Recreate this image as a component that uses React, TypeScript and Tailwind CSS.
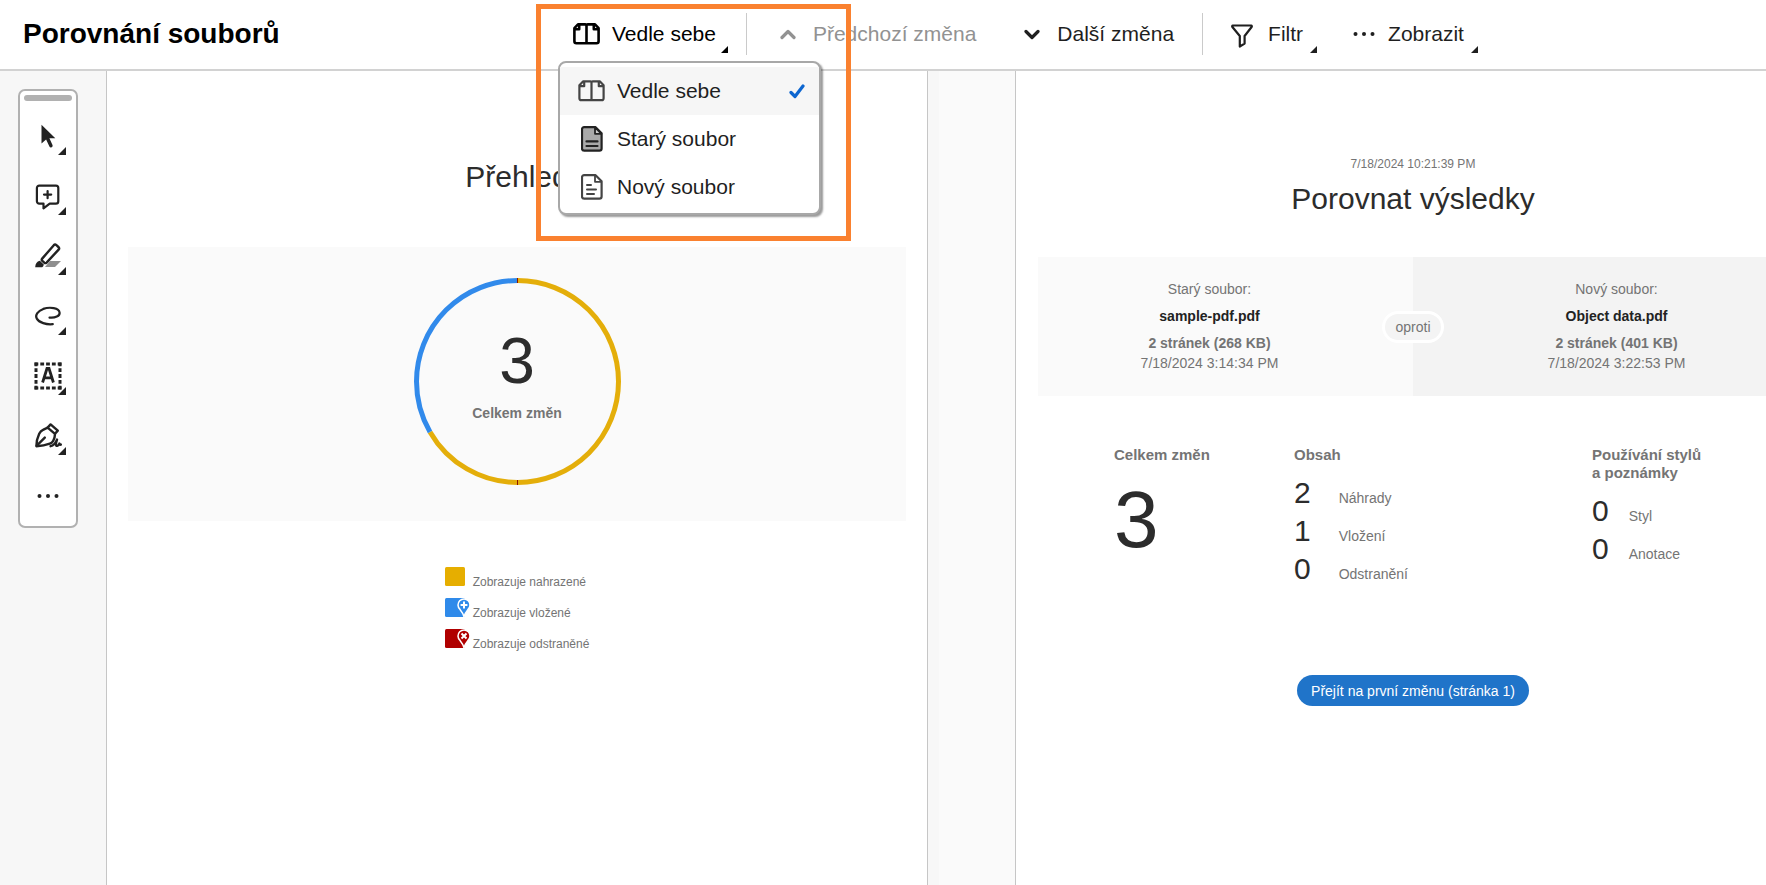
import { useState } from "react"
import type { ReactNode } from "react"

function SplitIcon({ className }: { className: string }) {
  return (
    <svg className={className} viewBox="0 0 27 22" fill="none" stroke="currentColor" strokeLinejoin="round">
      <path d="M13.500 2.600V20M5 1.400h7.200q1.300 0 1.300 1.200 0-1.200 1.300-1.200H22l3.600 3.800v13a2 2 0 0 1-2 2H3.400a2 2 0 0 1-2-2v-13z" />
      <path d="M6.200 1.600v4.600H1.600M20.800 1.600v4.600h4.600" />
    </svg>
  )
}

function OldFileIcon() {
  return (
    <svg className="h-[26px] w-[22px] text-[#222222]" viewBox="0 0 22 26" fill="none" stroke="currentColor" strokeWidth="2.200" strokeLinejoin="round">
      <path fill="#a9a9a9" d="M3.200 1.200h11.400l6 6v15.200a2.200 2.200 0 0 1-2.200 2.200H3.200A2.200 2.200 0 0 1 1 22.400V3.400a2.200 2.200 0 0 1 2.200-2.200z" />
      <path fill="#d0d0d0" strokeWidth="1.800" d="M14 1.400v6.400h6.400z" />
      <path d="M5.500 15.400h11M5.500 20h11" strokeLinecap="round" />
    </svg>
  )
}

function NewFileIcon() {
  return (
    <svg className="h-[26px] w-[22px] text-[#444444]" viewBox="0 0 22 26" fill="none" stroke="currentColor" strokeWidth="2.200" strokeLinejoin="round">
      <path d="M3.200 1.200h11.400l6 6v15.200a2.200 2.200 0 0 1-2.200 2.200H3.200A2.200 2.200 0 0 1 1 22.400V3.400a2.200 2.200 0 0 1 2.200-2.200z" />
      <path strokeWidth="1.800" d="M14 1.400v6.400h6.400" />
      <path d="M6 11h4M6 15.600h9M6 20h7" strokeWidth="2" strokeLinecap="round" />
    </svg>
  )
}

function Dots() {
  return (
    <svg className="h-[6px] w-[22px] shrink-0" viewBox="0 0 22 6" fill="currentColor">
      <circle cx="2.500" cy="3" r="2" />
      <circle cx="11" cy="3" r="2" />
      <circle cx="19.500" cy="3" r="2" />
    </svg>
  )
}

// small corner mark on buttons that open a menu
function Corner({ className }: { className: string }) {
  return (
    <svg className={className} viewBox="0 0 8 8" fill="currentColor">
      <path d="M8 0v8H0z" />
    </svg>
  )
}

const tools: { label: string; icon: ReactNode; menu: boolean }[] = [
  {
    label: "Vybrat",
    menu: true,
    icon: (
      <svg className="size-7" viewBox="0 0 28 28" fill="currentColor">
        <path d="M7.500 2.800v18.800l4.600-4 3.300 6.800a1.700 1.700 0 0 0 3.100-1.500l-3.100-6.600h5.900z" />
      </svg>
    ),
  },
  {
    label: "Přidat poznámku",
    menu: true,
    icon: (
      <svg className="size-7" viewBox="0 0 28 28" fill="none" stroke="currentColor" strokeWidth="2.200" strokeLinejoin="round" strokeLinecap="round">
        <path d="M5.300 3.600h16.600a2.400 2.400 0 0 1 2.400 2.400v13.200a2.400 2.400 0 0 1-2.400 2.400h-6.200L9.500 26.400v-4.800H5.300a2.400 2.400 0 0 1-2.400-2.400V6a2.400 2.400 0 0 1 2.400-2.400z" />
        <path d="M13.600 9v7.200M10 12.600h7.200" />
      </svg>
    ),
  },
  {
    label: "Zvýraznit",
    menu: true,
    icon: (
      <svg className="size-7" viewBox="0 0 28 28" fill="none">
        <path d="M16 19H27L21 25H11z" fill="#8e8e8e" />
        <path d="M8.200 16.600 19.800 3.200q1.200-1.200 2.600 0l2 1.800q1.400 1.300.2 2.600L12.600 20.600q-1.200 1-2.300.1l-2-1.800q-1.200-1-.1-2.300z" fill="#fff" stroke="currentColor" strokeWidth="2.400" />
        <path d="M1.200 25.200q.2-5.200 4.600-6.400l4 3.600Q9.300 25.300 7 25.300z" fill="currentColor" />
      </svg>
    ),
  },
  {
    label: "Kreslit",
    menu: true,
    icon: (
      <svg className="size-7" viewBox="0 0 28 28" fill="none" stroke="currentColor" strokeWidth="2.200" strokeLinecap="round">
        <path d="M15.500 15.600c5.600.6 10.600-1.600 10.100-5C25 6 16 4.500 9.300 6.900 3.500 9.200.8 13.200 2.800 16.600c2.200 4 9.500 6.300 16 5.600" />
      </svg>
    ),
  },
  {
    label: "Text",
    menu: true,
    icon: (
      <svg className="size-7" viewBox="0 0 28 28" fill="none" stroke="currentColor">
        <path d="M.5 2h27M.5 26h27" strokeWidth="3" strokeDasharray="3.800 2" />
        <path d="M2 .5v27M26 .5v27" strokeWidth="3" strokeDasharray="3.800 2" />
        <path d="M8.600 20.500 13 6.500h2l4.400 14M10.400 15.800h7.200" strokeWidth="2.800" />
      </svg>
    ),
  },
  {
    label: "Podepsat",
    menu: true,
    icon: (
      <svg className="size-7" viewBox="0 0 28 28" fill="none" stroke="currentColor" strokeWidth="2.400" strokeLinejoin="round" strokeLinecap="round">
        <path d="m13.600 5.600 7.400 6.200q0 4-1.800 7-1.200 2-3.400 2.800-5.800 2.200-13.400 2.600-.2-6 2.800-12.400 1.400-3 3.800-4z" />
        <path d="m13.600 5.600 3-3.200 7.200 6.200L21 11.800M2.800 23.600l8-8" />
        <path d="M16.600 24.200q4-1 6.400-6.600-2.200 6.600.2 6.200 1.600-.4 2.200-2.200.2 1.400 1.400 1" />
      </svg>
    ),
  },
  { label: "Další nástroje", menu: false, icon: <Dots /> },
]

const views = [
  { label: "Vedle sebe", icon: <SplitIcon className="h-[22px] w-[27px] stroke-[2.2] text-[#444444]" /> },
  { label: "Starý soubor", icon: <OldFileIcon /> },
  { label: "Nový soubor", icon: <NewFileIcon /> },
]

function Count({ value, label, className }: { value: number; label: string; className: string }) {
  return (
    <div className={`flex items-baseline ${className}`}>
      <span className="text-[30px] leading-[38px] text-[#2c2c2c]">{value}</span>
      <span className="text-sm">{label}</span>
    </div>
  )
}

function FileInfo({ title, name, pages, date }: { title: string; name: string; pages: string; date: string }) {
  return (
    <>
      <p>{title}</p>
      <p className="mt-[7px] font-bold text-[#222222]">{name}</p>
      <p className="mt-[7px] font-bold">{pages}</p>
      <p>{date}</p>
    </>
  )
}

// pin with a white outline, drawn over the right edge of the swatch
function LegendMark({ color, pin }: { color: string; pin?: string }) {
  return (
    <svg className="h-[20px] w-[25px]" viewBox="0 0 25 20">
      <rect width="20" height="19" rx="1.500" fill={color} />
      {pin && (
        <>
          <path d="M19 18.800Q18 15 15 11.400A6 6 0 1 1 23 11.400Q20 15 19 18.800z" fill={color} stroke="#fff" strokeWidth="1.500" />
          <path d={pin} stroke="#fff" strokeWidth="2" />
        </>
      )}
    </svg>
  )
}

export default function App() {
  const [view, setView] = useState("Vedle sebe")

  return (
    <div className="flex min-h-screen flex-col overflow-hidden bg-white font-['Liberation_Sans',Arial,sans-serif] text-[#747474]">
      <header className="flex h-[71px] items-start border-b-2 border-[#d2d2d2] pt-[14px] text-[21px] text-[#1f1f1f]">
        <h1 className="w-[573px] shrink-0 pl-[23px] text-[28px] leading-10 font-bold text-black">Porovnání souborů</h1>

        <div className="flex h-10 shrink-0 items-center whitespace-nowrap">
          <div className="relative">
            <button className="flex h-10 items-center text-black" aria-haspopup="menu" aria-expanded="true">
              <SplitIcon className="mr-3 h-[22px] w-[27px] stroke-[2.6]" />
              Vedle sebe
              <Corner className="mb-px ml-[5px] size-[7px] self-end" />
            </button>
            <div role="menu" className="absolute top-[47px] left-[-15px] z-10 w-[263px] rounded-lg border-2 border-[#a8a8a8] bg-white pt-1 pb-0.5 shadow-[2px_2px_2px_rgba(0,0,0,0.4)]">
              {views.map((v) => (
                <button
                  key={v.label}
                  role="menuitemradio"
                  aria-checked={view === v.label}
                  onClick={() => setView(v.label)}
                  className={`flex h-12 w-full items-center pr-[14px] pl-[18px] ${view === v.label ? "bg-[#f6f6f6]" : ""}`}
                >
                  <span className="mr-3 flex w-[27px] justify-center">{v.icon}</span>
                  {v.label}
                  {view === v.label && (
                    <svg className="ml-auto h-[15px] w-[16px] text-[#0d66d0]" viewBox="0 0 16 15" fill="none" stroke="currentColor" strokeWidth="3.200" strokeLinecap="round" strokeLinejoin="round">
                      <path d="m2 8.500 4 4L14 2" />
                    </svg>
                  )}
                </button>
              ))}
            </div>
            <div className="pointer-events-none absolute top-[-10px] left-[-37px] z-20 h-[237px] w-[315px] border-[5px] border-[#fa812f]" />
          </div>

          <div className="ml-[18px] h-[42px] w-px bg-[#cacaca]" />

          <button className="ml-[33px] flex items-center gap-[17px] text-[#929292]" disabled>
            <svg className="h-[11px] w-4" viewBox="0 0 16 11" fill="none" stroke="currentColor" strokeWidth="3.200" strokeLinecap="round" strokeLinejoin="round">
              <path d="m2 8.500 6-6 6 6" />
            </svg>
            Předchozí změna
          </button>
          <button className="ml-12 flex items-center gap-[17px]">
            <svg className="h-[11px] w-4" viewBox="0 0 16 11" fill="none" stroke="currentColor" strokeWidth="3.200" strokeLinecap="round" strokeLinejoin="round">
              <path d="m2 2.500 6 6 6-6" />
            </svg>
            Další změna
          </button>

          <div className="ml-7 h-[42px] w-px bg-[#cacaca]" />

          <button className="ml-7 flex h-10 items-center">
            <svg className="mt-1 mr-[15px] h-6 w-[22px]" viewBox="0 0 22 24" fill="none" stroke="currentColor" strokeWidth="2.200" strokeLinejoin="round">
              <path d="M1.600 1.500h18.800q.8.900 0 1.800L13.600 12v7.600l-4.800 2.900V12L1.600 3.300q-.8-.9 0-1.800z" />
            </svg>
            Filtr
            <Corner className="mb-px ml-[7px] size-[7px] self-end" />
          </button>
          <button className="ml-9 flex h-10 items-center">
            <Dots />
            <span className="ml-[13px]">Zobrazit</span>
            <Corner className="mb-px ml-[7px] size-[7px] self-end" />
          </button>
        </div>
      </header>

      <main className="grid flex-1 grid-cols-[106px_822fr_87px_751fr]">
        <aside className="bg-[#f7f7f7] pt-[18px] pl-[18px]">
          <div className="w-[60px] rounded-[7px] border-2 border-[#b1b1b1] bg-white pt-1">
            <div className="mx-1 mb-[5px] h-[6px] rounded-full bg-[#b1b1b1]" />
            {tools.map((t) => (
              <button key={t.label} aria-label={t.label} className="relative flex h-[60px] w-full items-center justify-center text-[#222222]">
                {t.icon}
                {t.menu && <Corner className="absolute right-[10px] bottom-[11px] size-2" />}
              </button>
            ))}
          </div>
        </aside>

        {/* Overview */}
        <section className="min-w-0 border-x border-[#c6c6c6] px-[21px] pt-[88px]">
          <h2 className="text-center text-[30px] leading-9 text-[#2c2c2c]">Přehled</h2>
          <div className="mt-[52px] bg-[#fafafa] pt-[31px] pb-9">
            <div className="relative mx-auto size-[207px]">
              <svg className="size-full" viewBox="0 0 207 207" fill="none" strokeWidth="5">
                <g transform="rotate(-90 103.500 103.500)">
                  <circle cx="103.500" cy="103.500" r="101" stroke="#e4ae0a" pathLength="3" strokeDasharray="2 1" />
                  <circle cx="103.500" cy="103.500" r="101" stroke="#318aeb" pathLength="3" strokeDasharray="1 2" strokeDashoffset="-2" />
                </g>
                <path d="M103.500 0v5M103.500 202v5" stroke="#8a1500" strokeWidth="1" />
              </svg>
              <div className="absolute inset-0 pt-[51px] text-center">
                <p className="text-[64px] leading-[64px] text-[#2c2c2c]">3</p>
                <p className="mt-[10px] text-sm leading-5 font-bold">Celkem změn</p>
              </div>
            </div>
          </div>
          <ul className="mx-auto mt-[46px] w-fit text-xs">
            <li className="flex h-[31px] items-start gap-[3px]">
              <LegendMark color="#e6ae00" />
              <span className="mt-[7px]">Zobrazuje nahrazené</span>
            </li>
            <li className="flex h-[31px] items-start gap-[3px]">
              <LegendMark color="#2f8aea" pin="M19 3.600v6.800M15.600 7h6.800" />
              <span className="mt-[7px]">Zobrazuje vložené</span>
            </li>
            <li className="flex h-[31px] items-start gap-[3px]">
              <LegendMark color="#b00000" pin="m16.500 4.500 5 5M21.500 4.500l-5 5" />
              <span className="mt-[7px]">Zobrazuje odstraněné</span>
            </li>
          </ul>
        </section>

        <div className="border-l-[11px] border-[#f7f7f7] bg-[#fafafa]" />

        {/* Results */}
        <section className="min-w-0 border-l border-[#c6c6c6] pt-[85px] pl-[22px]">
          <div className="-mr-[22px]">
            <p className="text-center text-xs">7/18/2024 10:21:39 PM</p>
            <h2 className="mt-[9px] text-center text-[30px] leading-9 text-[#2c2c2c]">Porovnat výsledky</h2>

            <div className="relative mt-10 grid grid-cols-2 text-center text-sm leading-5">
              <div className="bg-[#fafafa] pt-[22px] pr-8 pb-[23px]">
                <FileInfo title="Starý soubor:" name="sample-pdf.pdf" pages="2 stránek (268 KB)" date="7/18/2024 3:14:34 PM" />
              </div>
              <div className="bg-[#f3f3f3] pt-[22px] pb-[23px] pl-8">
                <FileInfo title="Nový soubor:" name="Object data.pdf" pages="2 stránek (401 KB)" date="7/18/2024 3:22:53 PM" />
              </div>
              <div className="absolute inset-0 flex items-center justify-center">
                <span className="rounded-full border-[3px] border-white bg-[#f4f4f4] px-[10px] py-[3px]">oproti</span>
              </div>
            </div>

            <div className="mt-[50px] grid grid-cols-[180fr_298fr_196fr] pl-[76px]">
              <div>
                <h3 className="text-[15px] leading-[18px] font-bold">Celkem změn</h3>
                <p className="mt-4 text-[80px] leading-[80px] text-[#2c2c2c]">3</p>
              </div>
              <div>
                <h3 className="mb-[10px] text-[15px] leading-[18px] font-bold">Obsah</h3>
                <Count className="gap-7" value={2} label="Náhrady" />
                <Count className="gap-7" value={1} label="Vložení" />
                <Count className="gap-7" value={0} label="Odstranění" />
              </div>
              <div>
                <h3 className="mb-[10px] text-[15px] leading-[18px] font-bold">
                  Používání stylů
                  <br />a poznámky
                </h3>
                <Count className="gap-5" value={0} label="Styl" />
                <Count className="gap-5" value={0} label="Anotace" />
              </div>
            </div>

            <button className="mx-auto mt-[87px] block h-[31px] rounded-full bg-[#2074c9] px-[14px] text-sm text-white">
              Přejít na první změnu (stránka 1)
            </button>
          </div>
        </section>
      </main>
    </div>
  )
}
